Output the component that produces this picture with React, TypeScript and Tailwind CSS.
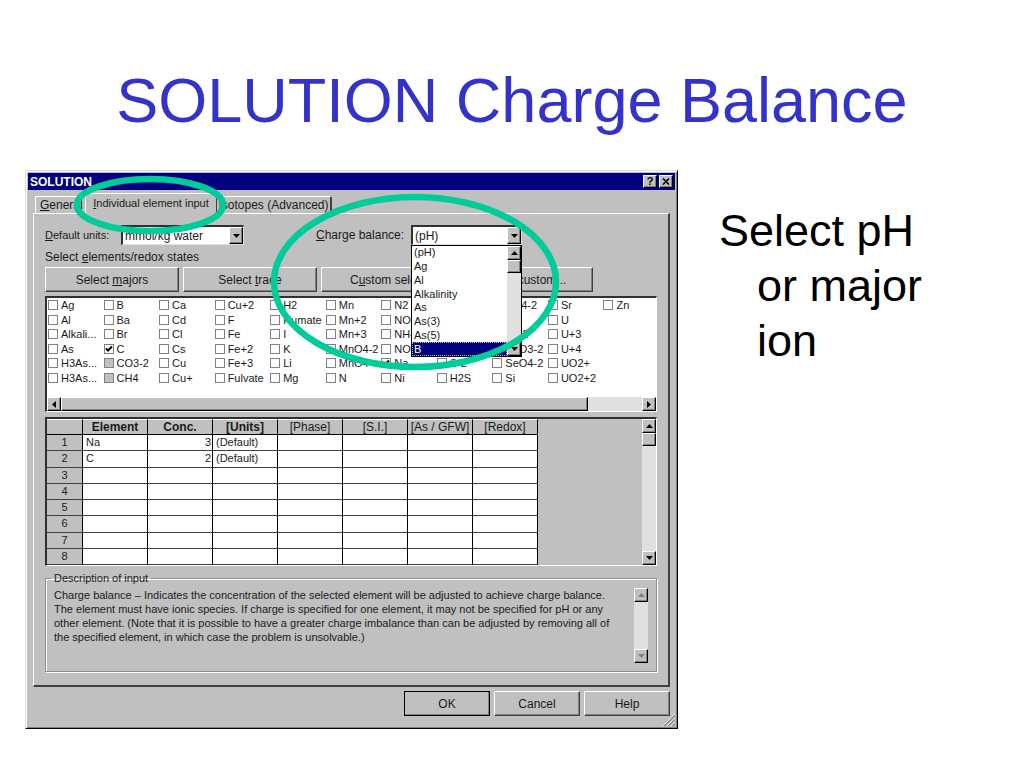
import React from 'react';

const columns = [
  ['Ag', 'Al', 'Alkali...', 'As', 'H3As...', 'H3As...'],
  ['B', 'Ba', 'Br', 'C', 'CO3-2', 'CH4'],
  ['Ca', 'Cd', 'Cl', 'Cs', 'Cu', 'Cu+'],
  ['Cu+2', 'F', 'Fe', 'Fe+2', 'Fe+3', 'Fulvate'],
  ['H2', 'Humate', 'I', 'K', 'Li', 'Mg'],
  ['Mn', 'Mn+2', 'Mn+3', 'MnO4-2', 'MnO4-', 'N'],
  ['N2', 'NO2-', 'NH4+', 'NO3-', 'Na', 'Ni'],
  ['O2', 'P', 'Pb', 'S', 'S-2', 'H2S'],
  ['SO4-2', 'Se', 'Se-2', 'SeO3-2', 'SeO4-2', 'Si'],
  ['Sr', 'U', 'U+3', 'U+4', 'UO2+', 'UO2+2'],
  ['Zn'],
];
const checked = ['C', 'Na'];
const grayed = ['CO3-2', 'CH4'];

const balanceOptions = ['(pH)', 'Ag', 'Al', 'Alkalinity', 'As', 'As(3)', 'As(5)', 'B'];

const headers = ['Element', 'Conc.', '[Units]', '[Phase]', '[S.I.]', '[As / GFW]', '[Redox]'];
const rows = [
  ['Na', '3', '(Default)', '', '', '', ''],
  ['C', '2', '(Default)', '', '', '', ''],
  ['', '', '', '', '', '', ''],
  ['', '', '', '', '', '', ''],
  ['', '', '', '', '', '', ''],
  ['', '', '', '', '', '', ''],
  ['', '', '', '', '', '', ''],
  ['', '', '', '', '', '', ''],
];

const raised = 'bg-[#c0c0c0] border border-t-white border-l-white border-r-black border-b-black shadow-[inset_-1px_-1px_0_#808080]';
const pushButton = 'h-[25px] text-center text-xs leading-none bg-[#c0c0c0] border border-t-white border-l-white border-r-[#404040] border-b-[#404040] shadow-[inset_-1px_-1px_0_#808080]';
const track = 'bg-[#e0e0e0]';

const arrows = {
  up: 'M0 4 L3.5 0 L7 4 Z',
  down: 'M0 0 L7 0 L3.5 4 Z',
  left: 'M4 0 L4 7 L0 3.5 Z',
  right: 'M0 0 L4 3.5 L0 7 Z',
};

const Arrow = ({ dir, color = '#000' }: { dir: keyof typeof arrows; color?: string }) => {
  const vertical = dir === 'up' || dir === 'down';
  return (
    <svg width={vertical ? 7 : 4} height={vertical ? 4 : 7} fill={color} aria-hidden="true">
      <path d={arrows[dir]} />
    </svg>
  );
};

const ArrowButton = ({ dir, color }: { dir: keyof typeof arrows; color?: string }) => (
  <button aria-label={`Scroll ${dir}`} className={`flex size-[14px] shrink-0 items-center justify-center ${raised}`}>
    <Arrow dir={dir} color={color} />
  </button>
);

const VerticalScroll = ({ thumb = true, color }: { thumb?: boolean; color?: string }) => (
  <div className={`flex w-[14px] shrink-0 flex-col justify-between ${track}`}>
    <div>
      <ArrowButton dir="up" color={color} />
      {thumb && <div className={`h-[13px] ${raised}`} />}
    </div>
    <ArrowButton dir="down" color={color} />
  </div>
);

const Combo = ({ id, value, width }: { id: string; value: string; width: string }) => (
  <div className={`relative h-[20px] ${width}`}>
    <select
      id={id}
      className="h-full w-full appearance-none border border-t-2 border-l-2 border-t-[#303030] border-l-[#303030] border-r-[#dfdfdf] border-b-[#dfdfdf] bg-white pl-[2px] text-xs leading-4"
    >
      <option>{value}</option>
    </select>
    <span className={`pointer-events-none absolute top-[2px] right-[1px] bottom-[1px] flex w-[14px] items-center justify-center ${raised}`}>
      <Arrow dir="down" />
    </span>
  </div>
);

const ElementBox = ({ name, id }: { name: string; id: string }) => (
  <div className="flex min-w-0 items-center gap-[3px]">
    <span className="relative size-[10px] shrink-0">
      <input
        id={id}
        type="checkbox"
        defaultChecked={checked.includes(name)}
        className={`block size-[10px] appearance-none border border-[#808080] ${grayed.includes(name) ? 'bg-[#c0c0c0]' : 'bg-white'}`}
      />
      {checked.includes(name) && (
        <svg className="pointer-events-none absolute inset-0" width="10" height="10" fill="none" stroke="#000" strokeWidth="2">
          <path d="M2 4.5 L4 6.5 L8 2.5" />
        </svg>
      )}
    </span>
    <label htmlFor={id} className="leading-[14px] whitespace-nowrap">{name}</label>
  </div>
);

const TitleBar = () => (
  <div className="flex h-[17px] items-center bg-[#000080] pr-[2px] pl-[2px] text-white">
    <h2 className="flex-1 text-xs font-bold">SOLUTION</h2>
    <button aria-label="What's this" className={`mr-[2px] flex h-[13px] w-[14px] items-center justify-center text-[11px] leading-none font-bold text-black ${raised}`}>?</button>
    <button aria-label="Close" className={`flex h-[13px] w-[14px] items-center justify-center ${raised}`}>
      <svg width="8" height="7" stroke="#000" strokeWidth="1.6" aria-hidden="true">
        <path d="M1 0.5 L7 6.5 M7 0.5 L1 6.5" />
      </svg>
    </button>
  </div>
);

const Tabs = () => (
  <div role="tablist" className="flex items-end pl-[2px]">
    <button role="tab" className="h-[17px] w-[50px] rounded-t-[2px] border-t border-l border-white pl-1 text-left text-xs leading-none">
      <u>G</u>eneral
    </button>
    <button role="tab" aria-selected="true" className="z-10 -mb-px h-[21px] w-[132px] rounded-t-[2px] border-t border-r border-l border-t-white border-r-[#404040] border-l-white bg-[#c0c0c0] pb-[2px] text-[11px] leading-none">
      <u>I</u>ndividual element input
    </button>
    <button role="tab" className="h-[17px] w-[115px] rounded-t-[2px] border-t border-r-2 border-t-white border-r-[#404040] text-xs leading-none">
      <u>I</u>sotopes (Advanced)
    </button>
  </div>
);

const ElementList = () => (
  <div className="mt-1 overflow-hidden border border-t-2 border-l-2 border-t-[#303030] border-l-[#303030] border-r-white border-b-white bg-white">
    <div className="grid h-[87px] w-[612px] grid-cols-11 pl-[1px]">
      {columns.map((names, c) => (
        <div key={c} className="grid grid-rows-6">
          {names.map((name, r) => (
            <ElementBox key={r} name={name} id={`el-${c}-${r}`} />
          ))}
        </div>
      ))}
    </div>
    <div className={`mt-[12px] flex h-[14px] ${track}`}>
      <ArrowButton dir="left" />
      <div className={`flex-1 ${raised}`} />
      <div className="w-[54px]" />
      <ArrowButton dir="right" />
    </div>
  </div>
);

const InputTable = () => (
  <div className="mt-[5px] flex justify-between border border-t-2 border-l-2 border-t-[#303030] border-l-[#303030] border-r-white border-b-white">
    <table className="h-[146px] table-fixed border-separate border-spacing-0">
      <thead>
        <tr>
          <th aria-label="Row" className="w-[36px] border-t border-r border-b border-t-white border-r-black border-b-black p-0" />
          {headers.map((h, i) => (
            <th
              key={h}
              className={`w-[65px] border-t border-r border-b border-t-white border-r-black border-b-black p-0 text-center text-xs leading-[14px] ${i < 3 ? 'font-bold' : 'font-normal'}`}
            >
              {h}
            </th>
          ))}
        </tr>
      </thead>
      <tbody>
        {rows.map((row, r) => (
          <tr key={r}>
            <th className="border-r border-b border-r-black border-b-[#404040] p-0 text-center leading-none font-normal">{r + 1}</th>
            {row.map((cell, c) => (
              <td key={c} className={`border-r border-b border-r-black border-b-[#404040] bg-white py-0 leading-none ${c === 1 ? 'pr-[1px] text-right' : 'pl-[3px]'}`}>
                {cell}
              </td>
            ))}
          </tr>
        ))}
      </tbody>
    </table>
    <VerticalScroll />
  </div>
);

const Description = () => (
  <fieldset className="mt-[5px] flex h-[101px] border border-[#909090] pr-[8px] pl-[8px] shadow-[1px_1px_0_#fff,inset_1px_1px_0_#fff]">
    <legend className="-ml-[3px] px-[3px] text-[11px] leading-[14px]">Description of input</legend>
    <p className="flex-1 pt-[3px] text-[11px] leading-[14px] whitespace-nowrap">
      Charge balance – Indicates the concentration of the selected element will be adjusted to achieve charge balance.<br />
      The element must have ionic species. If charge is specified for one element, it may not be specified for pH or any<br />
      other element. (Note that it is possible to have a greater charge imbalance than can be adjusted by removing all of<br />
      the specified element, in which case the problem is unsolvable.)
    </p>
    <div className="flex pt-[3px] pb-[8px]">
      <VerticalScroll thumb={false} color="#808080" />
    </div>
  </fieldset>
);

const SolutionDialog = () => (
  <section className="relative border border-t-[#dfdfdf] border-l-[#dfdfdf] border-r-black border-b-black bg-[#c0c0c0] p-[2px] text-[11px] text-[#1a1a1a] shadow-[inset_1px_1px_0_#fff,inset_-1px_-1px_0_#808080]">
    <TitleBar />
    <div className="px-[5px] pt-[3px]">
      <Tabs />
      <div className="border-t border-r-2 border-b-2 border-l border-t-white border-r-[#404040] border-b-[#404040] border-l-white px-[11px] pt-[11px] pb-[13px]">
        <div className="flex items-center">
          <label htmlFor="units" className="w-[76px] text-[11px]"><u>D</u>efault units:</label>
          <Combo id="units" value="mmol/kg water" width="w-[123px]" />
          <label htmlFor="balance" className="ml-[72px] w-[95px] text-xs"><u>C</u>harge balance:</label>
          <div className="relative">
            <Combo id="balance" value="(pH)" width="w-[111px]" />
            <div className="absolute top-full left-0 z-10 flex h-[112px] w-[111px] border border-black bg-white">
              <ul role="listbox" aria-label="Charge balance" className="grid flex-1 grid-rows-8">
                {balanceOptions.map((o) => (
                  <li key={o} role="option" aria-selected={o === 'B'} className={`flex items-center pl-[2px] text-[11px] leading-none ${o === 'B' ? 'bg-[#000080] text-white outline-1 -outline-offset-1 outline-dotted outline-[#c0c080]' : ''}`}>
                    {o}
                  </li>
                ))}
              </ul>
              <VerticalScroll />
            </div>
          </div>
        </div>
        <p className="mt-1 text-xs leading-4">Select <u>e</u>lements/redox states</p>
        <div className="mt-[2px] grid w-[548px] grid-cols-4 gap-1">
          <button className={pushButton}>Select <u>m</u>ajors</button>
          <button className={pushButton}>Select <u>t</u>race</button>
          <button className={pushButton}>C<u>u</u>stom select</button>
          <button className={pushButton}>C<u>l</u>ear custom...</button>
        </div>
        <ElementList />
        <InputTable />
        <Description />
      </div>
      <div className="mt-1 mb-[10px] flex justify-end gap-1">
        <button className={`w-[86px] ${pushButton} outline-1 -outline-offset-1 outline-black`}>OK</button>
        <button className={`w-[86px] ${pushButton}`}>Cancel</button>
        <button className={`w-[86px] ${pushButton}`}>Help</button>
      </div>
    </div>
    <svg className="absolute right-[2px] bottom-[2px]" width="12" height="12" fill="none" aria-hidden="true">
      <path d="M1 12 L12 1 M5 12 L12 5 M9 12 L12 9" stroke="#808080" strokeWidth="1.5" />
      <path d="M0 12 L12 0 M4 12 L12 4 M8 12 L12 8" stroke="#fff" strokeWidth="0.8" />
    </svg>
    {/* callouts around the active tab and the charge balance list */}
    <svg className="pointer-events-none absolute top-0 left-0 z-20" width="560" height="220" fill="none" stroke="#00cc99" strokeWidth="6.5" aria-hidden="true">
      <ellipse cx="124" cy="34" rx="73" ry="26" />
      <ellipse cx="389" cy="111" rx="141" ry="85" />
    </svg>
  </section>
);

const App = () => {
  return (
    <main className="min-h-screen bg-white pt-[64px] font-['Liberation_Sans',Arial,sans-serif] text-black">
      <h1 className="text-center text-[63px] leading-[72px] text-[#3333cc]">SOLUTION Charge Balance</h1>
      <div className="mt-[34px] grid grid-cols-[minmax(0,1fr)_346px] items-start pl-[25px]">
        <SolutionDialog />
        <p className="pt-[33px] pr-[80px] pl-[79px] -indent-[38px] text-[45px] leading-[55px]">Select pH or major ion</p>
      </div>
    </main>
  );
};

export default App;
